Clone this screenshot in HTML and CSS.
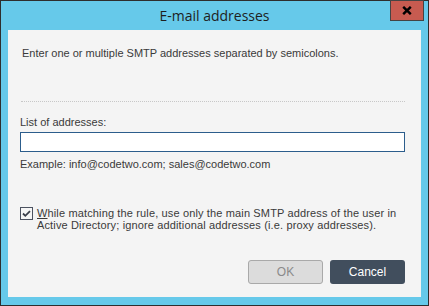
FILE: index.html
```html
<!DOCTYPE html>
<html>
<head>
<meta charset="utf-8">
<link rel="stylesheet" href="styles.css">
</head>
<body>
<div class="window">
  <div class="titlebar">E-mail addresses</div>
  <div class="close">
    <svg width="10" height="9" viewBox="0 0 10 9"><path d="M1.2 0.8 L8.8 8.2 M8.8 0.8 L1.2 8.2" stroke="#000" stroke-width="2.4" fill="none"/></svg>
  </div>
  <div class="content">
    <p class="intro">Enter one or multiple SMTP addresses separated by semicolons.</p>
    <div class="sep"></div>
    <label class="label">List of addresses:</label>
    <div class="input"></div>
    <p class="example">Example: info@codetwo.com; sales@codetwo.com</p>
    <div class="check-row">
      <div class="checkbox">
        <svg width="11" height="11" viewBox="0 0 11 11"><path d="M2 5.5 L4.3 7.8 L9 3.2" stroke="#3a3f4a" stroke-width="1.8" fill="none"/></svg>
      </div>
      <div class="check-text"><u>W</u>hile matching the rule, use only the main SMTP address of the user in Active Directory; ignore additional addresses (i.e. proxy addresses).</div>
    </div>
    <div class="buttons">
      <div class="btn btn-ok">OK</div>
      <div class="btn btn-cancel">Cancel</div>
    </div>
  </div>
</div>
</body>
</html>
```
FILE: styles.css
```css
html, body {
  margin: 0;
  padding: 0;
  background: #fff;
}
.window {
  position: relative;
  box-sizing: border-box;
  width: 429px;
  height: 306px;
  border: 1px solid #2e2e2e;
  background: #66c9ea;
  display: flex;
  flex-direction: column;
  font-family: "Liberation Sans", Arial, sans-serif;
  font-size: 11px;
  color: #3a3a3a;
}
.titlebar {
  height: 29px;
  line-height: 29px;
  text-align: center;
  font-family: "Open Sans", "Noto Sans", sans-serif;
  font-size: 14px;
  color: #1e1e1e;
}
.close {
  position: absolute;
  top: -1px;
  right: 4px;
  box-sizing: border-box;
  width: 34px;
  height: 21px;
  background: #c75b50;
  border: 1px solid #444;
  display: flex;
  align-items: center;
  justify-content: center;
}
.content {
  flex: 1;
  margin: 0 7px 8px 7px;
  background: #f4f4f4;
  padding: 0 16px 0 12px;
  display: flex;
  flex-direction: column;
}
.intro {
  margin: 16px 0 0 2px;
  line-height: 15px;
}
.sep {
  margin: 40px 0 0 1px;
  border-top: 1px dotted #c8c8c8;
}
.label {
  display: block;
  margin-top: 13px;
  line-height: 15px;
}
.input {
  margin-top: 2px;
  box-sizing: border-box;
  height: 20px;
  background: #fff;
  border: 1px solid #2c5d8c;
}
.example {
  margin: 5px 0 0 0;
  line-height: 15px;
}
.check-row {
  margin-top: 35px;
  display: flex;
  align-items: flex-start;
}
.checkbox {
  box-sizing: border-box;
  width: 13px;
  height: 13px;
  border: 1px solid #4c5260;
  background: #f6f6f6;
  flex: none;
  display: flex;
  align-items: center;
  justify-content: center;
  margin-right: 4px;
}
.check-text {
  line-height: 12px;
  letter-spacing: 0.14px;
  color: #3a3a3a;
}
.buttons {
  margin-top: 29px;
  display: flex;
  justify-content: flex-end;
  gap: 7px;
}
.btn {
  box-sizing: border-box;
  width: 75px;
  height: 24px;
  border-radius: 3px;
  display: flex;
  align-items: center;
  justify-content: center;
  font-size: 12px;
}
.btn-ok {
  background: #dcdcdc;
  border: 1px solid #a9a9a9;
  color: #8a8a8a;
}
.btn-cancel {
  background: #414e5d;
  color: #fff;
}
```
